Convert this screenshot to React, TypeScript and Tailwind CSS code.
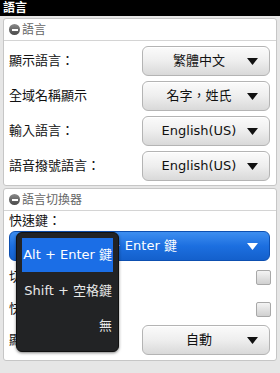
import React from 'react';

const FONT = { fontFamily: '"DejaVu Sans", "Noto Sans CJK TC", sans-serif' };

function Arrow({ white = false }: { white?: boolean }) {
  return (
    <svg width="11" height="7" viewBox="0 0 11 7" className="ml-[6px] shrink-0">
      <path d="M0 0 H11 L5.5 7 Z" fill={white ? '#ffffff' : '#111111'} />
    </svg>
  );
}

function SelectButton({ label }: { label: string }) {
  return (
    <div className="flex items-center w-[128px] h-[30px] pl-[14px] pr-[11px] rounded-[6px] border border-[#b4b4b4] bg-gradient-to-b from-[#fbfbfb] via-[#eeeeee] to-[#d9d9d9] shadow-[inset_0_1px_0_#ffffff]">
      <span className="flex-1 text-center text-[13px] text-[#111] whitespace-nowrap">{label}</span>
      <Arrow />
    </div>
  );
}

function SectionHeader({ title }: { title: string }) {
  return (
    <div className="flex items-center h-[22px] px-[5px] border-b border-[#d4d4d4]">
      {/* collapse icon */}
      <span className="flex items-center justify-center w-[11px] h-[11px] rounded-full bg-gradient-to-b from-[#8a8a8a] to-[#4a4a4a] mr-[2px]">
        <span className="w-[6px] h-[2px] bg-white" />
      </span>
      <span className="text-[12px] text-[#666]">{title}</span>
    </div>
  );
}

function Checkbox() {
  return (
    <span className="w-[15px] h-[15px] rounded-[2px] border border-[#a8a8a8] bg-gradient-to-b from-[#f4f4f4] to-[#d0d0d0]" />
  );
}

const rows = [
  { label: '顯示語言：', value: '繁體中文' },
  { label: '全域名稱顯示', value: '名字，姓氏' },
  { label: '輸入語言：', value: 'English(US)' },
  { label: '語音撥號語言：', value: 'English(US)' },
];

export default function App() {
  return (
    <div className="w-[280px] h-[373px] bg-[#e6e6e6] overflow-hidden" style={FONT}>
      {/* Title bar */}
      <div className="h-[16px] bg-black text-white text-[12px] font-bold leading-[16px] px-[3px]">語言</div>

      {/* Language panel */}
      <div className="mx-[3px] mt-[2px] bg-white border border-[#c6c6c6] rounded-[3px]">
        <SectionHeader title="語言" />
        <div className="flex flex-col gap-[5px] pt-[5px] pb-[4px] pr-[6px] pl-[5px]">
          {rows.map((r) => (
            <div key={r.label} className="flex items-center justify-between">
              <span className="text-[13px] text-[#111]">{r.label}</span>
              <SelectButton label={r.value} />
            </div>
          ))}
        </div>
      </div>

      {/* Language switcher panel */}
      <div className="relative mx-[3px] mt-[2px] bg-white border border-[#c6c6c6] rounded-[3px]">
        <SectionHeader title="語言切換器" />
        <div className="h-[20px] flex items-center px-[5px] text-[13px] text-[#111]">快速鍵：</div>
        <div className="px-[5px] pr-[6px]">
          <div className="flex items-center h-[30px] pl-[14px] pr-[11px] rounded-[6px] border border-[#0d4fb0] bg-gradient-to-b from-[#3d8ef0] via-[#1c6fe0] to-[#1460cc]">
            <span className="flex-1 text-center text-[13px] text-white whitespace-nowrap">Alt + Enter 鍵</span>
            <Arrow white />
          </div>
        </div>
        <div className="flex items-center justify-between h-[32px] px-[5px] pr-[5px] text-[13px] text-[#111]">
          <span>切換提示</span>
          <Checkbox />
        </div>
        <div className="flex items-center justify-between h-[32px] px-[5px] pr-[5px] text-[13px] text-[#111]">
          <span>快速切換</span>
          <Checkbox />
        </div>
        <div className="flex items-center justify-between pb-[5px] pl-[5px] pr-[6px]">
          <span className="text-[13px] text-[#111]">顯示圖示：</span>
          <SelectButton label="自動" />
        </div>

        {/* Open dropdown menu */}
        <div className="absolute left-[12px] top-[43px] w-[103px] p-[5px] pb-[8px] rounded-[6px] bg-[#222325] border border-[#111] shadow-[0_1px_3px_rgba(0,0,0,0.5)] flex flex-col">
          <div className="h-[34px] flex items-center justify-end pr-[1px] bg-[#1b6ee6] text-white text-[13px] whitespace-nowrap">
            Alt + Enter 鍵
          </div>
          <div className="h-[37px] flex items-center justify-end pr-[1px] text-[#e8e8e8] text-[13px] whitespace-nowrap">
            Shift + 空格鍵
          </div>
          <div className="h-[34px] flex items-center justify-end pr-[1px] text-[#e8e8e8] text-[13px]">無</div>
        </div>
      </div>
    </div>
  );
}
